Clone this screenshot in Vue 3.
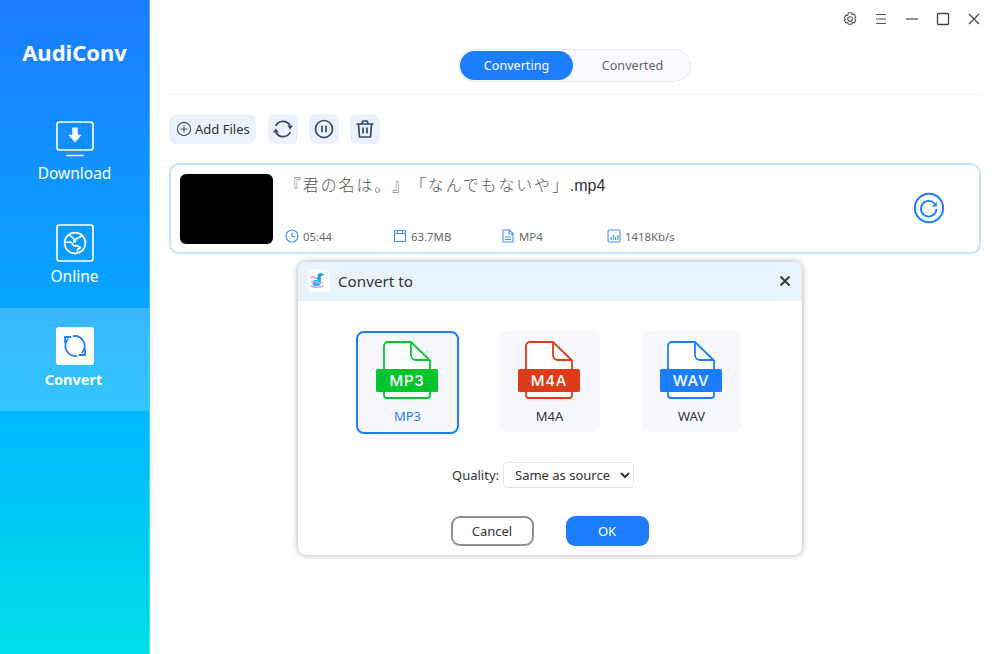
<script setup>
const formats = [
  { name: 'MP3', color: '#05c42e', active: true },
  { name: 'M4A', color: '#dc3c18', active: false },
  { name: 'WAV', color: '#1c7eff', active: false },
]
</script>

<template>
  <div class="app">
    <aside class="sidebar">
      <div class="logo">AudiConv</div>
      <nav>
        <div class="nav-item">
          <svg class="nav-icon" viewBox="0 0 38 38" fill="none" stroke="#fff" stroke-width="1.6">
            <rect x="1" y="1" width="36" height="28" rx="2.5" />
            <path d="M11 34.5h16" stroke-linecap="round" />
            <path d="M16.3 6.5h5.4v7.2h4.1L19 21.3l-6.8-7.6h4.1z" fill="#fff" stroke="none" />
          </svg>
          <span>Download</span>
        </div>
        <div class="nav-item">
          <svg class="nav-icon" viewBox="0 0 38 38" fill="none" stroke="#fff" stroke-width="1.6">
            <rect x="1" y="1" width="36" height="36" rx="2.5" />
            <circle cx="19" cy="19" r="10.4" />
            <path d="M13 10.500l5 4.500v3l1 0 1-3 6-3M9 18.500l6-.5 2 3 2 1 1.500-.500 4 2-3 2v3.500" stroke-linejoin="round" />
          </svg>
          <span>Online</span>
        </div>
        <div class="nav-item active">
          <div class="nav-icon white-box">
            <svg width="24" height="24" viewBox="0 0 24 24" fill="none" stroke="#2381f5" stroke-width="1.800" stroke-linecap="round" stroke-linejoin="round">
              <path d="M13.500 21.900A10 10 0 0 1 4.800 5.500" />
              <path d="M10.500 2.100A10 10 0 0 1 19.200 18.500" />
              <path d="M2 8.500V3H7.500M22 15.500V21H16.500" />
            </svg>
          </div>
          <span>Convert</span>
        </div>
      </nav>
    </aside>

    <main class="main">
      <div class="window-controls">
        <svg viewBox="0 0 16 16" fill="none" stroke="#555" stroke-width="1.1" stroke-linejoin="round">
          <path d="M6.300 1.300h3.400l.6 1.700 1.800-.4 1.700 2.900-1.200 1.500 1.200 1.500-1.700 2.900-1.800-.4-.6 1.700H6.300l-.6-1.700-1.800.4-1.700-2.900L3.400 8 2.200 6.500l1.700-2.900 1.800.4z" transform="translate(0 .5)" />
          <circle cx="8" cy="8" r="2.300" />
        </svg>
        <svg viewBox="0 0 16 16" fill="none" stroke="#555" stroke-width="1.2">
          <path d="M3 3.500h10M3 8h10M3 12.500h10" />
        </svg>
        <svg viewBox="0 0 16 16" fill="none" stroke="#555" stroke-width="1.3">
          <path d="M2 8h12" />
        </svg>
        <svg viewBox="0 0 16 16" fill="none" stroke="#444" stroke-width="1.3">
          <rect x="2.500" y="2.500" width="11" height="11" rx="1" />
        </svg>
        <svg viewBox="0 0 16 16" fill="none" stroke="#444" stroke-width="1.2">
          <path d="M3 3l10 10M13 3L3 13" />
        </svg>
      </div>

      <div class="tabs-row">
        <div class="tabs">
          <div class="tab on">Converting</div>
          <div class="tab off">Converted</div>
        </div>
      </div>

      <div class="toolbar">
        <button class="add-btn">
          <svg width="16" height="16" viewBox="0 0 16 16" fill="none" stroke="#44566e" stroke-width="1.1">
            <circle cx="8" cy="8" r="6.600" />
            <path d="M8 4.500v7M4.500 8h7" />
          </svg>
          Add Files
        </button>
        <button class="tool-btn">
          <svg width="20" height="20" viewBox="0 0 20 20" fill="none" stroke="#34496a" stroke-width="1.800">
            <path d="M2.700 7A8 8 0 0 1 17 6.500" />
            <path d="M17.300 13A8 8 0 0 1 3 13.500" />
            <path d="M14.300 6.500h5.700l-2.900 4zM0 13.500h5.700l-2.800-4z" fill="#34496a" stroke="none" />
          </svg>
        </button>
        <button class="tool-btn">
          <svg width="20" height="20" viewBox="0 0 20 20" fill="none" stroke="#34496a" stroke-width="1.700">
            <circle cx="10" cy="10" r="8.500" />
            <path d="M8 6.700v6.600M12 6.700v6.600" />
          </svg>
        </button>
        <button class="tool-btn">
          <svg width="20" height="20" viewBox="0 0 20 20" fill="none" stroke="#34496a" stroke-width="1.700" stroke-linejoin="round">
            <path d="M1.500 5h17M7 5l.8-3h4.400l.8 3M3.500 5l1 13h11l1-13M8 8.500v6M12 8.500v6" />
          </svg>
        </button>
      </div>

      <section class="file-card">
        <div class="thumb"></div>
        <div class="file-info">
          <div class="file-title"><span class="ja" lang="ja">『君の名は。』「なんでもないや」</span>.mp4</div>
          <div class="meta">
            <div class="meta-item">
              <svg width="14" height="14" viewBox="0 0 14 14" fill="none" stroke="#3f92f8" stroke-width="1.100">
                <circle cx="7" cy="7" r="6" />
                <path d="M7 3.500V7.500H10" />
              </svg>
              05:44
            </div>
            <div class="meta-item">
              <svg width="14" height="14" viewBox="0 0 14 14" fill="none" stroke="#3f92f8" stroke-width="1.100">
                <path d="M1.500 1.500h11v11h-11zM1.500 4.500h11M4.500 1.500v3h5v-3" />
              </svg>
              63.7MB
            </div>
            <div class="meta-item">
              <svg width="14" height="14" viewBox="0 0 14 14" fill="none" stroke="#3f92f8" stroke-width="1.100">
                <path d="M2 1h6.500L12 4.500V13H2zM8 1v4h4M4 8h6M4 10.500h6" />
              </svg>
              MP4
            </div>
            <div class="meta-item">
              <svg width="14" height="14" viewBox="0 0 14 14" fill="none" stroke="#3f92f8" stroke-width="1.100">
                <rect x="1" y="1" width="12" height="12" rx="1.500" />
                <path d="M4 11V8M6.300 11V5.500M8.600 11V7.500M10.800 11V6" />
              </svg>
              1418Kb/s
            </div>
          </div>
        </div>
        <svg class="retry" width="32" height="32" viewBox="0 0 32 32" fill="none" stroke="#1c7eff">
          <circle cx="16" cy="16" r="14.200" stroke-width="2" />
          <path d="M21.500 11.500A7.800 7.800 0 1 0 23.500 17" stroke-width="1.800" />
          <path d="M23.800 9.500v5h-5z" fill="#1c7eff" stroke="none" />
        </svg>
      </section>
    </main>

    <div class="dialog">
      <header class="dialog-head">
        <div class="dialog-title">
          <div class="app-icon">
            <svg width="20" height="20" viewBox="0 0 20 20" fill="none">
              <path d="M2 6.500c3-1.500 5 1 8 1.500M2 15c3 1.500 7 1.500 12 .5" stroke="#f590ea" stroke-width="1.600" stroke-linecap="round" />
              <path d="M9.300 11V5.500c0-1.800 1-2.700 2.400-2.700l2 .8-2 .6c-.5.300-.6.700-.6 1.300v7" stroke="#14a6d8" stroke-width="1.500" fill="#14a6d8" />
              <ellipse cx="7.500" cy="12" rx="4" ry="3.300" fill="#12c4e4" />
              <path d="M2.500 11c3-1.500 7 1.500 11 .5" stroke="#f590ea" stroke-width="1.300" stroke-linecap="round" />
            </svg>
          </div>
          Convert to
        </div>
        <svg width="12" height="12" viewBox="0 0 12 12" fill="none" stroke="#333" stroke-width="1.800">
          <path d="M1.500 1.500l9 9M10.500 1.500l-9 9" />
        </svg>
      </header>

      <div class="formats">
        <div v-for="f in formats" :key="f.name" class="format" :class="{ selected: f.active }">
          <svg width="62" height="58" viewBox="0 0 62 58" fill="none" :stroke="f.color" stroke-width="1.800">
            <path d="M35 1H12a4 4 0 0 0-4 4v49a3 3 0 0 0 3 3h40a3 3 0 0 0 3-3V19.500z" fill="#fff" stroke-linejoin="round" />
            <path d="M35 1v13a5 5 0 0 0 5 5h14" />
            <rect x="0" y="28" width="62" height="23" rx="1.500" :fill="f.color" stroke="none" />
            <text x="31" y="45" text-anchor="middle" class="band-text" fill="#fff" stroke="none">{{ f.name }}</text>
          </svg>
          <span>{{ f.name }}</span>
        </div>
      </div>

      <div class="quality">
        <label for="quality">Quality:</label>
        <select id="quality">
          <option>Same as source</option>
        </select>
      </div>

      <div class="actions">
        <button class="cancel">Cancel</button>
        <button class="ok">OK</button>
      </div>
    </div>
  </div>
</template>

<style>
html, body { margin: 0; background: #fff; }
</style>

<style scoped>
.app {
  position: relative;
  display: flex;
  width: 1000px;
  height: 654px;
  overflow: hidden;
  background: #fff;
  font-family: "Noto Sans", "Noto Sans CJK JP", sans-serif;
  color: #333;
}
.sidebar {
  width: 150px;
  flex: none;
  box-sizing: border-box;
  background: linear-gradient(180deg, #1c7cff 0%, #08a4ff 46%, #00b8ff 63%, #00dfe7 100%);
  border-right: 1px solid rgba(255, 255, 255, .25);
  background-origin: border-box;
  color: #fff;
}
.logo {
  height: 102px;
  padding-top: 1px;
  box-sizing: border-box;
  display: flex;
  align-items: center;
  justify-content: center;
  font-size: 22px;
  font-weight: 700;
}
.nav-item {
  height: 103px;
  box-sizing: border-box;
  padding-top: 19px;
  display: flex;
  flex-direction: column;
  align-items: center;
  gap: 3px;
  font-size: 15.500px;
  line-height: 22px;
}
.nav-item.active {
  background: rgba(255, 255, 255, .2);
  font-weight: 700;
  font-size: 14.500px;
}
.nav-item.active span {
  margin-right: 2px;
}
.nav-icon {
  display: block;
  width: 38px;
  height: 38px;
}
.white-box {
  display: flex;
  align-items: center;
  justify-content: center;
  background: #fff;
  border-radius: 3px;
}
.main {
  flex: 1;
  min-width: 0;
  padding: 0 19px;
}
.window-controls {
  display: flex;
  justify-content: flex-end;
  align-items: center;
  gap: 15px;
  height: 38px;
  margin-right: -1px;
}
.window-controls svg {
  width: 16px;
  height: 16px;
}
.tabs-row {
  display: flex;
  justify-content: center;
  align-items: flex-start;
  height: 57px;
  padding-top: 11px;
  box-sizing: border-box;
  border-bottom: 1px solid #f0f1f5;
}
.tabs {
  display: flex;
  width: 233px;
  height: 33px;
  margin-left: -1px;
  padding: 1px;
  box-sizing: border-box;
  border: 1px solid #e6e8ee;
  border-radius: 17px;
  background: #f9fafe;
  font-size: 12.600px;
}
.tab {
  flex: 1;
  display: flex;
  align-items: center;
  justify-content: center;
  border-radius: 15px;
  color: #666;
}
.tab.off {
  padding-left: 3px;
}
.tab.on {
  flex: none;
  width: 113px;
  background: #1c7eff;
  color: #fff;
}
.toolbar {
  display: flex;
  align-items: center;
  gap: 11px;
  margin-top: 19px;
}
.add-btn {
  display: flex;
  align-items: center;
  gap: 3px;
  width: 87px;
  height: 30px;
  margin-right: 1px;
  padding: 0 0 0 7px;
  border: 0;
  border-radius: 8px;
  background: #ebf1fd;
  color: #333;
  font: 13px "Noto Sans", sans-serif;
}
.tool-btn {
  display: flex;
  align-items: center;
  justify-content: center;
  width: 30px;
  height: 30px;
  padding: 0;
  border: 0;
  border-radius: 6px;
  background: #ebf1fd;
}
.file-card {
  display: flex;
  align-items: stretch;
  height: 91px;
  margin-top: 19px;
  padding: 9px 34px 9px 9px;
  box-sizing: border-box;
  border: 2px solid #c4e2ff;
  border-radius: 10px;
}
.thumb {
  width: 93px;
  height: 70px;
  flex: none;
  background: #000;
  border-radius: 6px;
}
.file-info {
  flex: 1;
  display: flex;
  flex-direction: column;
  justify-content: space-between;
  padding-left: 12px;
}
.file-title {
  margin-top: -2px;
  font-family: "Liberation Sans", sans-serif;
  font-size: 16px;
  line-height: 24px;
  color: #333;
}
.ja {
  font-family: "Noto Sans CJK JP", sans-serif;
  font-weight: 300;
  letter-spacing: 1.850px;
  text-spacing-trim: space-all;
  color: #555;
}
.meta {
  display: flex;
  font-size: 11.400px;
  color: #666;
  margin-bottom: -1px;
}
.meta-item {
  display: flex;
  align-items: center;
  gap: 4px;
  width: 108px;
  height: 16px;
}
.meta-item:nth-child(3) {
  width: 106px;
}
.retry {
  align-self: center;
  flex: none;
  margin-top: -2px;
}
.dialog {
  position: absolute;
  left: 298px;
  top: 262px;
  width: 504px;
  height: 293px;
  box-sizing: border-box;
  background: #fff;
  border-radius: 8px;
  box-shadow: 0 0 6px rgba(0, 0, 0, .35);
  overflow: hidden;
}
.dialog-head {
  display: flex;
  align-items: center;
  justify-content: space-between;
  height: 39px;
  box-sizing: border-box;
  padding: 0 11px 2px 9px;
  background: #e9f3fe;
}
.dialog-title {
  display: flex;
  align-items: center;
  gap: 8px;
  font-size: 15.200px;
}
.app-icon {
  display: flex;
  align-items: center;
  justify-content: center;
  width: 22px;
  height: 22px;
  margin-left: 1px;
  background: #fff;
  border-radius: 5px;
}
.formats {
  display: flex;
  align-items: flex-start;
  justify-content: center;
  gap: 41px;
  margin-top: 30px;
  padding-right: 2px;
}
.format {
  display: flex;
  flex-direction: column;
  align-items: center;
  gap: 8px;
  width: 101px;
  height: 101px;
  padding-top: 10px;
  box-sizing: border-box;
  background: #f6f8fd;
  border-radius: 8px;
  font-size: 13px;
  line-height: 18px;
}
.format svg {
  margin-left: -1px;
}
.format.selected {
  width: 103px;
  height: 103px;
  margin-right: -1px;
  padding-top: 8px;
  border: 2px solid #1c7eff;
  color: #1c7eff;
}
.band-text {
  font: 500 15px Inter, sans-serif;
  letter-spacing: .8px;
}
.quality {
  display: flex;
  align-items: center;
  justify-content: center;
  gap: 4px;
  margin-top: 28px;
  font-size: 13px;
  padding-right: 14px;
}
.quality select {
  width: 131px;
  height: 26px;
  border: 1px solid #e4e4e4;
  border-radius: 4px;
  background: #fff;
  color: #333;
  font: 13px "Noto Sans", sans-serif;
  padding-left: 7px;
}
.actions {
  display: flex;
  justify-content: center;
  gap: 32px;
  margin-top: 28px;
  padding-right: 1px;
}
.actions button {
  width: 83px;
  height: 30px;
  box-sizing: border-box;
  border-radius: 9px;
  font: 13px "Noto Sans", sans-serif;
  padding: 0;
}
.cancel {
  background: #fff;
  border: 2px solid #8f8f8f;
  color: #333;
}
.ok {
  background: #1c7eff;
  border: 0;
  color: #fff;
}
</style>
